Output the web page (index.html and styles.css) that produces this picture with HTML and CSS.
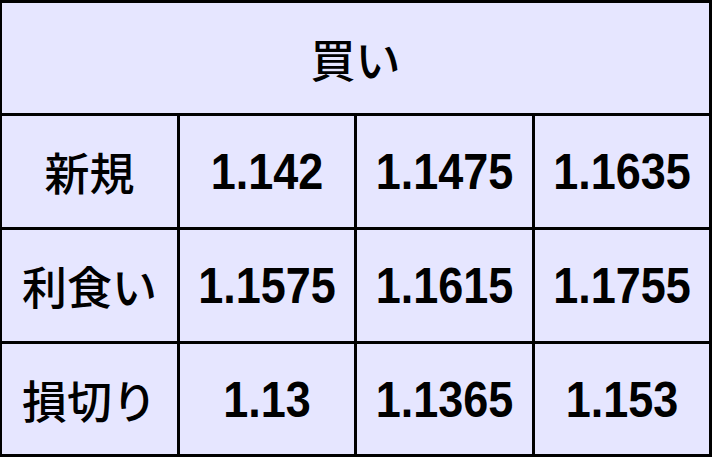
FILE: index.html
```html
<!DOCTYPE html>
<html lang="ja">
<head>
<meta charset="utf-8">
<link rel="stylesheet" href="styles.css">
</head>
<body>
<div class="grid">
  <div class="cell head jp">買い</div>
  <div class="cell jp">新規</div>
  <div class="cell num"><span>1.142</span></div>
  <div class="cell num"><span>1.1475</span></div>
  <div class="cell num"><span>1.1635</span></div>
  <div class="cell jp">利食い</div>
  <div class="cell num"><span>1.1575</span></div>
  <div class="cell num"><span>1.1615</span></div>
  <div class="cell num"><span>1.1755</span></div>
  <div class="cell jp">損切り</div>
  <div class="cell num"><span>1.13</span></div>
  <div class="cell num"><span>1.1365</span></div>
  <div class="cell num"><span>1.153</span></div>
</div>
</body>
</html>
```
FILE: styles.css
```css
html, body {
  margin: 0;
  padding: 0;
  background: #000;
}
.grid {
  width: 712px;
  height: 457px;
  box-sizing: border-box;
  background: #000;
  padding: 3px 3px 3px 2px;
  display: grid;
  grid-template-columns: 175px 174px 175px 174px;
  grid-template-rows: 110px 111px 111px 110px;
  gap: 3px;
}
.cell {
  background: #e6e6ff;
  display: flex;
  align-items: center;
  justify-content: center;
  color: #000;
}
.head {
  grid-column: 1 / 5;
}
.jp {
  font-family: "Noto Sans CJK JP", sans-serif;
  font-weight: 500;
  font-size: 45px;
  line-height: 1;
}
.num {
  font-family: "Liberation Sans", Arial, sans-serif;
  font-weight: 700;
  font-size: 45px;
  line-height: 1;
}
.num span {
  display: inline-block;
  transform: scaleY(1.12);
}
```
